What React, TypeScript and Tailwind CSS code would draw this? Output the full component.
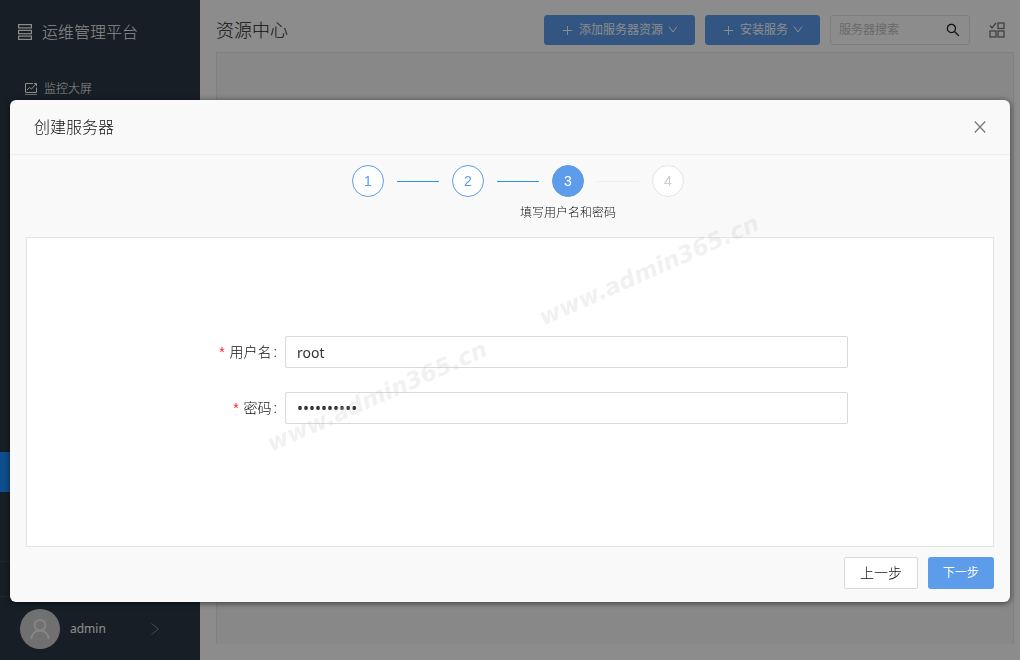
import { useState } from 'react';
import { clsx } from 'clsx';
import { AiOutlinePlus, AiOutlineSearch, AiOutlineUser } from 'react-icons/ai';

const STEPS = [
  { id: 1, title: '' },
  { id: 2, title: '' },
  { id: 3, title: '填写用户名和密码' },
  { id: 4, title: '' },
];

const CURRENT_STEP = 3;

function ServerIcon() {
  return (
    <svg width="14" height="16" viewBox="0 0 14 16" fill="none" stroke="currentColor" strokeWidth="1.2" aria-hidden="true">
      <rect x="0.6" y="0.6" width="12.8" height="3.3" />
      <rect x="0.6" y="6.4" width="12.8" height="3.3" />
      <rect x="0.6" y="12.1" width="12.8" height="3.3" />
    </svg>
  );
}

function ChartIcon() {
  return (
    <svg width="14" height="14" viewBox="0 0 14 14" fill="none" stroke="currentColor" aria-hidden="true">
      <path d="M9 1.5H1.5v9h11V5.5" />
      <path d="M1 12.5h12" strokeOpacity="0.7" />
      <path d="M3 8l2.5-2.5 2 1.5L12 2M10 1.5h2.5V4" />
    </svg>
  );
}

function DownIcon() {
  return (
    <svg width="10" height="10" viewBox="0 0 10 10" fill="none" stroke="currentColor" aria-hidden="true">
      <path d="M1 1.5l4 5.5L9 1.5" />
    </svg>
  );
}

function AppsIcon() {
  return (
    <svg width="16" height="16" viewBox="0 0 16 16" fill="none" stroke="currentColor" strokeWidth="1.3" aria-hidden="true">
      <path d="M1 3.5l2 2.5 4-5" />
      <rect x="9" y="1" width="6" height="5.5" />
      <rect x="1" y="9" width="6" height="6" />
      <rect x="9" y="9" width="6" height="6" />
    </svg>
  );
}

function Sidebar() {
  return (
    <aside className="flex w-[200px] shrink-0 flex-col bg-[#2a3845] text-white">
      <div className="flex h-16 items-center gap-2.5 px-[18px] text-base font-light">
        <ServerIcon />
        <span>运维管理平台</span>
      </div>
      <nav className="flex flex-1 flex-col justify-between pt-[5px] pb-[69px] text-xs">
        <a href="#screen" className="flex h-10 items-center gap-1.5 px-6 font-light">
          <ChartIcon />
          监控大屏
        </a>
        <a href="#resources" aria-label="资源中心" className="block h-10 bg-[#1890ff]" />
      </nav>
      <div className="h-9 border-y border-[#3a4754]" />
      <button type="button" className="flex h-[63px] items-center px-5 text-left text-xs">
        <span className="flex size-10 items-center justify-center rounded-full bg-[#cccccc] text-white">
          <AiOutlineUser size={26} className="opacity-80" />
        </span>
        <span className="ml-2.5 flex-1">admin</span>
        <svg width="10" height="12" viewBox="0 0 10 12" fill="none" stroke="#7f8a94" className="mr-5" aria-hidden="true">
          <path d="M1.5 0.5l7 5.5-7 5.5" />
        </svg>
      </button>
    </aside>
  );
}

function Toolbar() {
  return (
    <header className="flex h-[52px] items-center gap-2.5 pt-2 pr-[9px]">
      <h1 className="flex-1 text-lg font-light text-[#222222]">资源中心</h1>
      <button type="button" className="flex h-[30px] items-center gap-[5px] rounded-[3px] border border-[#5c9ceb] bg-[#5c9ceb] px-4 text-xs text-white">
        <AiOutlinePlus size={13} />
        添加服务器资源
        <DownIcon />
      </button>
      <button type="button" className="flex h-[30px] items-center gap-[5px] rounded-[3px] border border-[#5c9ceb] bg-[#5c9ceb] px-4 text-xs text-white">
        <AiOutlinePlus size={13} />
        安装服务
        <DownIcon />
      </button>
      <div className="flex h-[30px] w-[140px] items-center rounded-[3px] border border-[#e3e3e3] px-2">
        <input type="text" aria-label="服务器搜索" placeholder="服务器搜索" className="w-full min-w-0 text-xs outline-none placeholder:text-[#bfbfbf]" />
        <AiOutlineSearch size={16} className="shrink-0 text-[#222222]" />
      </div>
      <button type="button" aria-label="视图" className="ml-[9px] text-[#777777]">
        <AppsIcon />
      </button>
    </header>
  );
}

function Steps() {
  return (
    <ol className="flex justify-center pt-2.5 pl-4">
      {STEPS.map(({ id, title }, i) => {
        const done = id < CURRENT_STEP;
        const active = id === CURRENT_STEP;
        return (
          <li key={id} className="flex items-start">
            {i > 0 && (
              <span className={clsx('mx-[13px] mt-4 h-px w-[42px]', done || active ? 'bg-[#2f8fec]' : 'bg-[#eeeeee]')} />
            )}
            <div className="flex w-8 flex-col items-center">
              <span
                className={clsx(
                  "flex size-8 items-center justify-center rounded-full border font-['Liberation_Sans',sans-serif] text-sm",
                  done && 'border-[#5c9ceb] bg-white text-[#5c9ceb]',
                  active && 'border-[#5c9ceb] bg-[#5c9ceb] text-white',
                  !done && !active && 'border-[#e4e4e4] bg-white text-[#cccccc]',
                )}
              >
                {id}
              </span>
              {title && <span className="mt-[7px] text-xs leading-[18px] font-light whitespace-nowrap text-[#111111]">{title}</span>}
            </div>
          </li>
        );
      })}
    </ol>
  );
}

function Watermark({ className }: { className: string }) {
  return (
    <span
      aria-hidden="true"
      className={clsx(
        "pointer-events-none absolute -rotate-[24deg] font-['DejaVu_Sans',sans-serif] text-[23px] leading-6 font-bold whitespace-nowrap text-[#c8c8c8]/25 italic",
        className,
      )}
    >
      www.admin365.cn
    </span>
  );
}

interface FieldProps {
  id: string;
  label: string;
  type: string;
  value: string;
  onChange: (v: string) => void;
}

function Field({ id, label, type, value, onChange }: FieldProps) {
  return (
    <div className="flex items-center">
      <label htmlFor={id} className="flex w-[258px] shrink-0 justify-end pr-2 text-sm font-light text-[#111111]">
        <span className="mr-[5px] font-['Liberation_Sans',sans-serif] text-[#f5222d]">*</span>
        {label}
        <span className="ml-0.5">:</span>
      </label>
      <input
        id={id}
        type={type}
        value={value}
        onChange={(e) => onChange(e.target.value)}
        className={clsx(
          'mr-[145px] h-8 min-w-0 flex-1 rounded-xs border border-[#d9d9d9] bg-white px-[11px] text-[#333333] outline-none',
          type === 'password' ? 'text-base' : 'text-sm',
        )}
      />
    </div>
  );
}

function CreateServerModal() {
  const [username, setUsername] = useState('root');
  const [password, setPassword] = useState('0123456789');

  return (
    <div className="fixed inset-0 bg-black/45 px-2.5 pt-[100px]">
      <form
        role="dialog"
        aria-labelledby="modal-title"
        onSubmit={(e) => e.preventDefault()}
        className="relative rounded-md bg-[#f9f9f9] shadow-[0_1px_6px_rgba(0,0,0,0.6)]"
      >
        <div className="flex h-[55px] items-center justify-between border-b border-[#eeeeee] px-6">
          <h2 id="modal-title" className="text-base font-light text-[#111111]">创建服务器</h2>
          <button type="button" aria-label="关闭" className="text-[#777777]">
            <svg width="12" height="12" viewBox="0 0 12 12" fill="none" stroke="currentColor" strokeWidth="1.2" aria-hidden="true">
              <path d="M0.8 0.5l10.4 11M11.2 0.5l-10.4 11" />
            </svg>
          </button>
        </div>
        <Steps />
        <div className="mx-4 mt-[15px] flex min-h-[310px] flex-col justify-center gap-6 border border-[#e3e3e3] bg-white pb-6">
          <Field id="username" label="用户名" type="text" value={username} onChange={setUsername} />
          <Field id="password" label="密码" type="password" value={password} onChange={setPassword} />
        </div>
        <div className="flex justify-end gap-2.5 px-4 pt-2.5 pb-[13px]">
          <button type="button" className="h-8 rounded-xs border border-[#d9d9d9] bg-white px-[15px] text-sm font-light text-[#111111]">上一步</button>
          <button type="submit" className="h-8 rounded-[3px] bg-[#5c9ceb] px-[15px] text-xs text-white">下一步</button>
        </div>
        <Watermark className="top-[158px] left-[520px]" />
        <Watermark className="top-[284px] left-[248px]" />
      </form>
    </div>
  );
}

export default function App() {
  return (
    <div className="flex min-h-screen bg-white font-['Noto_Sans','Noto_Sans_CJK_SC',sans-serif]">
      <Sidebar />
      <main className="flex min-w-0 flex-1 flex-col pr-1.5 pb-4 pl-4">
        <Toolbar />
        <section className="flex-1 border border-b-0 border-[#e8e8e8] bg-[#f7f7f7]" />
      </main>
      <CreateServerModal />
    </div>
  );
}
